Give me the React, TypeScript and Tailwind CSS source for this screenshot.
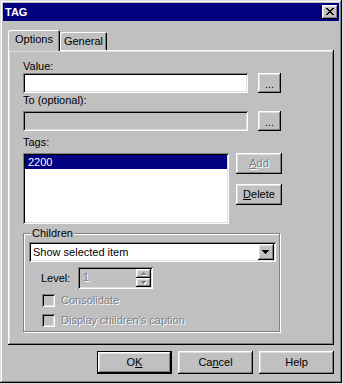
import React from "react";

const raised =
  "shadow-[inset_-1px_-1px_#000,inset_1px_1px_#fff,inset_-2px_-2px_#808080,inset_2px_2px_#dfdfdf]";
const sunken =
  "shadow-[inset_1px_1px_#808080,inset_-1px_-1px_#fff,inset_2px_2px_#000,inset_-2px_-2px_#dfdfdf]";
const disabledText = "text-[#808080] [text-shadow:1px_1px_0_#fff]";

function Btn({
  className = "",
  children,
  disabled = false,
}: {
  className?: string;
  children: React.ReactNode;
  disabled?: boolean;
}) {
  return (
    <div
      className={`flex items-center justify-center bg-[#c0c0c0] ${raised} ${
        disabled ? disabledText : "text-black"
      } ${className}`}
    >
      {children}
    </div>
  );
}

function UpArrow({ down = false }: { down?: boolean }) {
  return (
    <svg width="6" height="4" viewBox="0 0 6 4" shapeRendering="crispEdges">
      {down ? (
        <>
          <path d="M1 1h5v1H1zM2 2h3v1H2zM3 3h1v1H3z" fill="#fff" />
          <path d="M0 0h5v1H0zM1 1h3v1H1zM2 2h1v1H2z" fill="#808080" />
        </>
      ) : (
        <>
          <path d="M3 1h1v1H3zM2 2h3v1H2zM1 3h5v1H1z" fill="#fff" />
          <path d="M2 0h1v1H2zM1 1h3v1H1zM0 2h5v1H0z" fill="#808080" />
        </>
      )}
    </svg>
  );
}

export default function App() {
  return (
    <div className="w-[343px] h-[384px] bg-[#dfdfdf]">
      <div
        className={`w-[342px] h-[383px] bg-[#c0c0c0] p-[3px] flex flex-col shadow-[inset_-1px_-1px_#000,inset_1px_1px_#dfdfdf,inset_-2px_-2px_#808080,inset_2px_2px_#fff] font-['Liberation_Sans',Arial,sans-serif] text-[11px] leading-[13px] text-black`}
      >
        {/* Title bar */}
        <div className="h-[18px] shrink-0 bg-[#000080] flex items-center justify-between pl-[2px] pr-[1px]">
          <span className="font-bold text-white leading-[13px]">TAG</span>
          <div className={`w-[16px] h-[14px] bg-[#c0c0c0] ${raised} flex items-start pl-[4px] pt-[3px]`}>
            <svg width="8" height="7" viewBox="0 0 8 7" shapeRendering="crispEdges">
              <path
                d="M0 0h2v1H0zM6 0h2v1H6zM1 1h2v1H1zM5 1h2v1H5zM2 2h4v1H2zM3 3h2v1H3zM2 4h4v1H2zM1 5h2v1H1zM5 5h2v1H5zM0 6h2v1H0zM6 6h2v1H6z"
                fill="#000"
              />
            </svg>
          </div>
        </div>

        {/* Tabs */}
        <div className="flex items-end mt-[9px] ml-[5px] h-[21px] shrink-0">
          <div className="relative z-10 w-[52px] h-[21px] bg-[#c0c0c0] rounded-t-[2px] shadow-[inset_1px_1px_#fff,inset_-1px_0_#000,inset_-2px_0_#808080] flex justify-center pt-[3px]">
            Options
          </div>
          <div className="w-[47px] h-[18px] mb-[1px] bg-[#c0c0c0] rounded-t-[2px] shadow-[inset_1px_1px_#fff,inset_-1px_0_#000,inset_-2px_0_#808080] flex justify-center pt-[3px]">
            General
          </div>
        </div>

        {/* Panel */}
        <div className={`ml-[5px] -mt-[1px] w-[326px] h-[295px] shrink-0 bg-[#c0c0c0] ${raised} pl-[15px] pt-[10px] flex flex-col`}>
          <div>Value:</div>
          <div className="flex">
            <div className={`w-[225px] h-[20px] bg-white ${sunken}`} />
            <Btn className="ml-[10px] w-[23px] h-[20px] pt-[3px]">...</Btn>
          </div>
          <div className="mt-[1px]">To (optional):</div>
          <div className="flex mt-[4px]">
            <div className={`w-[225px] h-[20px] bg-[#c0c0c0] ${sunken}`} />
            <Btn className="ml-[10px] w-[23px] h-[20px] pt-[3px]">...</Btn>
          </div>
          <div className="mt-[5px]">Tags:</div>
          <div className="flex items-start mt-[4px]">
            <div className={`w-[206px] h-[71px] bg-white ${sunken} p-[2px]`}>
              <div className="h-[14px] bg-[#000080] text-white pl-[3px] leading-[14px]">2200</div>
            </div>
            <div className="flex flex-col ml-[7px]">
              <Btn disabled className="w-[46px] h-[21px]">
                <span className="underline">A</span>dd
              </Btn>
              <Btn className="mt-[10px] w-[46px] h-[21px]">
                <span className="underline">D</span>elete
              </Btn>
            </div>
          </div>

          {/* Group box */}
          <div className="relative mt-[9px] w-[257px] h-[99px] border border-[#808080] shadow-[inset_1px_1px_#fff,1px_1px_#fff] px-[5px] pt-[8px] flex flex-col">
            <span className="absolute -top-[7px] left-[7px] bg-[#c0c0c0] px-[1px]">Children</span>
            <div className={`w-[247px] h-[20px] bg-white ${sunken} flex items-center justify-between pl-[4px] pr-[2px]`}>
              <span>Show selected item</span>
              <div className={`w-[16px] h-[16px] bg-[#c0c0c0] ${raised} flex items-start pl-[4px] pt-[6px]`}>
                <svg width="7" height="4" viewBox="0 0 7 4" shapeRendering="crispEdges">
                  <path d="M0 0h7v1H0zM1 1h5v1H1zM2 2h3v1H2zM3 3h1v1H3z" fill="#000" />
                </svg>
              </div>
            </div>
            <div className="flex items-center mt-[5px] h-[22px]">
              <span className="ml-[12px] w-[37px]">Level:</span>
              <div className={`w-[75px] h-[22px] bg-[#c0c0c0] ${sunken} flex justify-between pl-[5px] pr-[2px] pt-[2px]`}>
                <span className={`${disabledText} leading-[16px]`}>1</span>
                <div className="flex flex-col">
                  <div className={`w-[15px] h-[9px] bg-[#c0c0c0] ${raised} flex items-center justify-center`}>
                    <UpArrow />
                  </div>
                  <div className={`w-[15px] h-[9px] bg-[#c0c0c0] ${raised} flex items-center justify-center`}>
                    <UpArrow down />
                  </div>
                </div>
              </div>
            </div>
            <div className="flex items-center mt-[5px] h-[13px] ml-[13px]">
              <div className={`w-[13px] h-[13px] bg-[#c0c0c0] ${sunken}`} />
              <span className={`ml-[6px] ${disabledText}`}>Consolidate</span>
            </div>
            <div className="flex items-center mt-[7px] h-[13px] ml-[13px]">
              <div className={`w-[13px] h-[13px] bg-[#c0c0c0] ${sunken}`} />
              <span className={`ml-[6px] ${disabledText}`}>Display children&apos;s caption</span>
            </div>
          </div>
        </div>

        {/* Bottom buttons */}
        <div className="ml-[5px] mt-[6px] w-[326px] flex justify-end gap-[6px]">
          <div className="w-[75px] h-[23px] border border-black flex">
            <Btn className="w-full h-full">
              O<span className="underline">K</span>
            </Btn>
          </div>
          <Btn className="w-[75px] h-[23px]">
            Ca<span className="underline">n</span>cel
          </Btn>
          <Btn className="w-[75px] h-[23px]">Help</Btn>
        </div>
      </div>
    </div>
  );
}
